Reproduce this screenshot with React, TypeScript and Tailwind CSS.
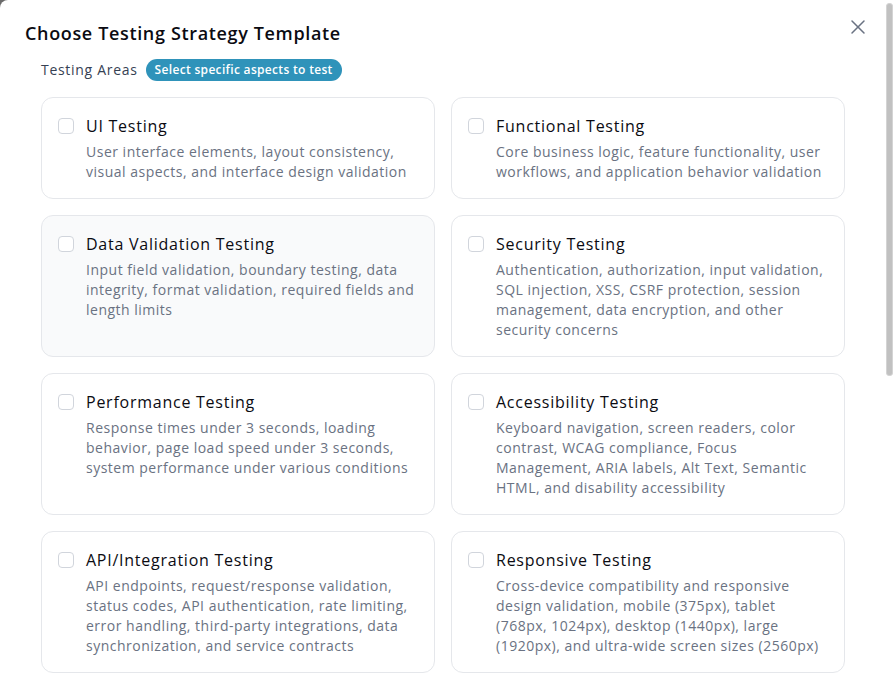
import React from 'react';
import { X } from 'lucide-react';

const areas = [
  {
    title: 'UI Testing',
    description: 'User interface elements, layout consistency, visual aspects, and interface design validation',
  },
  {
    title: 'Functional Testing',
    description: 'Core business logic, feature functionality, user workflows, and application behavior validation',
  },
  {
    title: 'Data Validation Testing',
    description:
      'Input field validation, boundary testing, data integrity, format validation, required fields and length limits',
    hovered: true,
  },
  {
    title: 'Security Testing',
    description:
      'Authentication, authorization, input validation, SQL injection, XSS, CSRF protection, session management, data encryption, and other security concerns',
  },
  {
    title: 'Performance Testing',
    description:
      'Response times under 3 seconds, loading behavior, page load speed under 3 seconds, system performance under various conditions',
  },
  {
    title: 'Accessibility Testing',
    description:
      'Keyboard navigation, screen readers, color contrast, WCAG compliance, Focus Management, ARIA labels, Alt Text, Semantic HTML, and disability accessibility',
  },
  {
    title: 'API/Integration Testing',
    description:
      'API endpoints, request/response validation, status codes, API authentication, rate limiting, error handling, third-party integrations, data synchronization, and service contracts',
  },
  {
    title: 'Responsive Testing',
    description:
      'Cross-device compatibility and responsive design validation, mobile (375px), tablet (768px, 1024px), desktop (1440px), large (1920px), and ultra-wide screen sizes (2560px)',
  },
];

const App = () => {
  return (
    <div className="relative h-[697px] w-[895px] bg-[#6b6b6b] font-['Open_Sans',sans-serif]">
      <div className="h-full w-full overflow-y-auto rounded-tl-lg bg-white [scrollbar-width:none]">
        {/* Header */}
        <div className="flex items-start justify-between pl-[25px] pr-[25px] pt-[15px]">
          <h2 className="mt-[4px] text-[18px] font-semibold leading-7 tracking-[0.65px] text-[#0b0b12]">
            Choose Testing Strategy Template
          </h2>
          <button className="text-gray-500">
            <X size={24} strokeWidth={1.5} />
          </button>
        </div>

        {/* Testing areas */}
        <div className="pb-6 pl-[41px] pr-[50px] pt-[12px]">
          <div className="flex items-center gap-2">
            <span className="text-sm font-medium tracking-[0.7px] text-gray-700">Testing Areas</span>
            <span className="rounded-full bg-[#2f93ba] px-[9px] py-[2px] text-xs font-semibold leading-[18px] tracking-[0.32px] text-white">
              Select specific aspects to test
            </span>
          </div>

          <div className="mt-4 grid grid-cols-2 gap-4">
            {areas.map((area) => (
              <label
                key={area.title}
                className={`flex cursor-pointer gap-3 rounded-xl border border-gray-200 p-4 ${
                  area.hovered ? 'bg-gray-50' : 'bg-white'
                }`}
              >
                <span className="mt-1 h-4 w-4 shrink-0 rounded-[4px] border border-gray-300 bg-white" />
                <div>
                  <div className="text-base font-medium leading-6 tracking-[0.75px] text-[#0b0b12]">{area.title}</div>
                  <p className="mt-1 text-sm leading-5 tracking-[0.5px] text-gray-500">{area.description}</p>
                </div>
              </label>
            ))}
          </div>
        </div>
      </div>

      {/* Scrollbar thumb overlay */}
      <div className="pointer-events-none absolute right-[2px] top-[3px] h-[373px] w-[7px] rounded-[3px] border border-[#d4d4d4] bg-[#c1c1c1]" />
    </div>
  );
};

export default App;
